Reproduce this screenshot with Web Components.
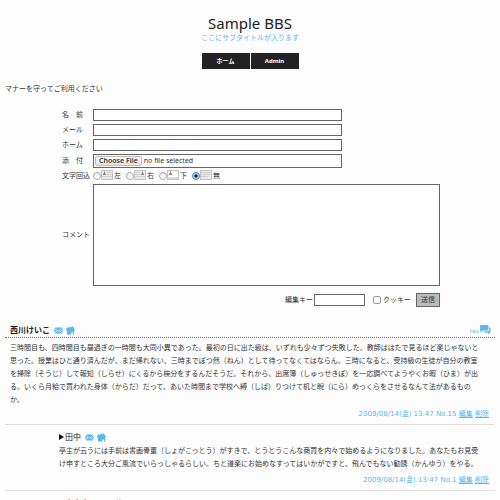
<!DOCTYPE html>
<html lang="ja">
<head>
<meta charset="utf-8">
<meta name="viewport" content="width=device-width, initial-scale=1">
<title>Sample BBS</title>
<style>
    body {
        margin: 0;
        background: #fdfdfd;
        color: #333;
        font: 7px/13px "DejaVu Sans", "Noto Sans CJK JP", sans-serif;
        --accent: #5bb8e8;
    }
</style>
</head>
<body>
<bbs-page>
    <bbs-header slot="header" heading="Sample BBS" subtitle="ここにサブタイトルが入ります">
        <nav-button href="#home">ホーム</nav-button>
        <nav-button href="#admin">Admin</nav-button>
    </bbs-header>
    <span slot="notice">マナーを守ってご利用ください</span>
    <post-form></post-form>
    <bbs-post author="西川けいこ" date="2009/08/14(金) 13:47" number="15">三時間目も、四時間目も昼過ぎの一時間も大同小異であった。最初の日に出た級は、いずれも少々ずつ失敗した。教師ははたで見るほど楽じゃないと思った。授業はひと通り済んだが、まだ帰れない、三時までぽつ然（ねん）として待ってなくてはならん。三時になると、受持級の生徒が自分の教室を掃除（そうじ）して報知（しらせ）にくるから検分をするんだそうだ。それから、出席簿（しゅっせきぼ）を一応調べてようやくお暇（ひま）が出る。いくら月給で買われた身体（からだ）だって、あいた時間まで学校へ縛（しば）りつけて机と睨（にら）めっくらをさせるなんて法があるものか。</bbs-post>
    <bbs-post reply author="田中" date="2009/08/14(金) 13:47" number="1">亭主が云うには手前は書画骨董（しょがこっとう）がすきで、とうとうこんな商買を内々で始めるようになりました。あなたもお見受け申すところ大分ご風流でいらっしゃるらしい。ちと道楽にお始めなすってはいかがですと、飛んでもない勧誘（かんゆう）をやる。</bbs-post>
    <bbs-post reply author="山本小川" date="2009/08/14(金) 13:48" number="2">今日は。</bbs-post>
</bbs-page>

<script>
class BbsPage extends HTMLElement {
    constructor() {
        super();
        this.attachShadow({ mode: 'open' }).innerHTML = `
        <style>
            :host {
                display: block;
                height: 100vh;
                overflow: hidden;
                padding: 0 5px;
                box-sizing: border-box;
            }

            .notice {
                margin: 14px 0 13px;
            }
        </style>
        <slot name="header"></slot>
        <p class="notice"><slot name="notice"></slot></p>
        <main><slot></slot></main>
        `;
    }
}

class BbsHeader extends HTMLElement {
    constructor() {
        super();
        this.attachShadow({ mode: 'open' }).innerHTML = `
        <style>
            :host {
                display: block;
                padding-top: 14px;
                text-align: center;
            }

            h1 {
                margin: 0;
                color: #222;
                font: 15px/18px "Noto Sans", sans-serif;
            }

            p {
                margin: 0;
                color: var(--accent);
                line-height: 12px;
            }

            nav {
                display: flex;
                justify-content: center;
                gap: 1px;
                margin-top: 9px;
            }
        </style>
        <h1></h1>
        <p></p>
        <nav><slot></slot></nav>
        `;
    }

    connectedCallback() {
        this.shadowRoot.querySelector('h1').textContent = this.getAttribute('heading');
        this.shadowRoot.querySelector('p').textContent = this.getAttribute('subtitle');
    }
}

class NavButton extends HTMLElement {
    constructor() {
        super();
        this.attachShadow({ mode: 'open' }).innerHTML = `
        <style>
            :host {
                display: block;
                width: 48px;
            }

            a {
                display: block;
                background: #222;
                color: #fff;
                font: bold 6px/16px "Noto Sans", "Noto Sans CJK JP", sans-serif;
                text-decoration: none;
            }
        </style>
        <a><slot></slot></a>
        `;
    }

    connectedCallback() {
        this.shadowRoot.querySelector('a').href = this.getAttribute('href');
    }
}

class WrapOption extends HTMLElement {
    constructor() {
        super();
        this.attachShadow({ mode: 'open' }).innerHTML = `
        <style>
            :host {
                display: block;
            }

            label {
                display: flex;
                align-items: center;
            }

            input {
                appearance: none;
                width: 8px;
                height: 8px;
                margin: 0;
                border: 1px solid #aaa;
                border-radius: 50%;
                background: linear-gradient(#eee, #fff);
            }

            input:checked {
                border-color: #5588bb;
                background: radial-gradient(circle, #123 0 1px, #9ccbf2 2px);
            }

            svg {
                width: 12px;
                height: 10px;
                margin: 0 1px 3px 0;
            }
        </style>
        <label><input type="radio" name="wrap"><svg viewBox="0 0 12 10" aria-hidden="true"></svg><slot></slot></label>
        `;
    }

    connectedCallback() {
        const kind = this.getAttribute('kind');
        const input = this.shadowRoot.querySelector('input');
        input.checked = this.hasAttribute('checked');
        input.addEventListener('change', () => {
            for (const other of this.parentNode.querySelectorAll('wrap-option')) {
                if (other !== this) other.shadowRoot.querySelector('input').checked = false;
            }
        });

        const person = x => `<rect x="${x - 2}" y="1" width="5" height="5" fill="#eee"/><path d="M${x} 1.5h1v2h1v1.5h-3v-1.5h1z" fill="#888"/>`;
        const lines = {
            left: 'M6 2.5h5M6 4.5h5M1 6.5h10',
            right: 'M1 2.5h5M1 4.5h5M1 6.5h10',
            below: '',
            none: 'M1 2.5h10M1 4.5h10M1 6.5h7'
        }[kind];
        const x = { left: 3, right: 8, below: 3 }[kind];
        this.shadowRoot.querySelector('svg').innerHTML = `
            <rect x=".5" y=".5" width="11" height="9" fill="${kind === 'below' ? '#fff' : '#e9e9e9'}" stroke="#c4c4c4"/>
            ${x ? person(x) : ''}
            ${kind === 'below' ? '<path d="M1 7h10v2h-10z" fill="#ddd"/>' : ''}
            <path d="${lines}" stroke="#d0d0d0" fill="none"/>`;
    }
}

class PostForm extends HTMLElement {
    constructor() {
        super();
        this.attachShadow({ mode: 'open' }).innerHTML = `
        <style>
            :host {
                display: block;
            }

            form {
                box-sizing: border-box;
                max-width: 380px;
                margin: 0 auto 16px;
                padding-left: 2px;
            }

            .fields {
                display: grid;
                grid-template-columns: 28px 1fr;
                column-gap: 3px;
                row-gap: 3px;
                align-items: center;
                line-height: 10px;
            }

            label {
                white-space: pre;
            }

            input, textarea, button {
                box-sizing: border-box;
                margin: 0;
                padding: 0 2px;
                border: 1px solid #666;
                border-radius: 0;
                background: #fff;
                font: inherit;
            }

            .text {
                width: 249px;
                max-width: 100%;
                height: 12px;
            }

            .file {
                position: relative;
                display: flex;
                align-items: center;
                gap: 2px;
                box-sizing: border-box;
                width: 249px;
                max-width: 100%;
                height: 14px;
                padding-left: 1px;
                border: 1px solid #666;
                background: #fff;
                font-family: "Noto Sans", sans-serif;
            }

            .file input {
                position: absolute;
                inset: 0;
                width: 100%;
                opacity: 0;
            }

            .choose {
                padding: 0 3px;
                border: 1px solid #bbb;
                border-radius: 2px;
                background: linear-gradient(#fff, #e4e4e4);
                font-weight: 600;
                line-height: 8px;
            }

            .options {
                display: flex;
                gap: 5px;
                height: 10px;
                align-items: center;
            }

            textarea {
                width: 100%;
                height: 102px;
                resize: none;
            }

            .send {
                display: flex;
                align-items: center;
                justify-content: flex-end;
                margin-top: 7px;
            }

            .key {
                width: 51px;
                height: 12px;
                margin: 0 8px 0 1px;
            }

            .cookie {
                appearance: none;
                width: 8px;
                height: 8px;
                margin-right: 2px;
                padding: 0;
                border-color: #999;
                border-radius: 2px;
            }

            .cookie:checked {
                background: #5588bb;
            }

            button {
                width: 24px;
                height: 14px;
                margin-left: 5px;
                padding: 0;
                background: #bbb;
                color: #333;
            }
        </style>
        <form>
            <div class="fields">
                <label for="name">名　前</label>
                <input class="text" id="name">
                <label for="mail">メール</label>
                <input class="text" id="mail">
                <label for="home">ホーム</label>
                <input class="text" id="home">
                <label for="file">添　付</label>
                <div class="file">
                    <span class="choose">Choose File</span>
                    <span>no file selected</span>
                    <input type="file" id="file">
                </div>
                <span id="wrap">文字回込</span>
                <div class="options" role="radiogroup" aria-labelledby="wrap">
                    <wrap-option kind="left">左</wrap-option>
                    <wrap-option kind="right">右</wrap-option>
                    <wrap-option kind="below">下</wrap-option>
                    <wrap-option kind="none" checked>無</wrap-option>
                </div>
                <label for="comment">コメント</label>
                <textarea id="comment"></textarea>
            </div>
            <div class="send">
                <label for="key">編集キー</label>
                <input class="key" id="key" type="password">
                <input class="cookie" id="cookie" type="checkbox">
                <label for="cookie">クッキー</label>
                <button type="button">送信</button>
            </div>
        </form>
        `;
    }
}

class BbsPost extends HTMLElement {
    constructor() {
        super();
        this.attachShadow({ mode: 'open' }).innerHTML = `
        <style>
            :host {
                display: block;
                border-bottom: 1px solid #ddd;
            }

            header {
                display: flex;
                align-items: center;
                height: 14px;
                padding: 0 4px 0 5px;
                border-bottom: 1px dotted #777;
            }

            h2 {
                margin: 0 4px 0 0;
                color: #222;
                font-size: 8px;
                line-height: 13px;
            }

            a {
                color: var(--accent);
            }

            svg {
                display: block;
                fill: var(--accent);
            }

            .icon {
                margin-right: 3px;
            }

            .res {
                display: flex;
                align-items: center;
                margin-left: auto;
                font-size: 6px;
                text-decoration: none;
            }

            .body {
                margin: 0;
                padding: 4px 15px 0 5px;
            }

            footer {
                padding: 1px 6px 3px 0;
                color: var(--accent);
                text-align: right;
            }

            :host([reply]) article {
                margin-left: 50px;
            }

            :host([reply]) header {
                padding: 5px 4px 0;
                border: 0;
            }

            :host([reply]) h2 {
                font-weight: normal;
            }

            :host([reply]) h2::before {
                content: "";
                display: inline-block;
                border: solid transparent;
                border-width: 3px 0 3px 5px;
                border-left-color: #111;
                margin-right: 1px;
            }

            :host([reply]) .res {
                display: none;
            }

            :host([reply]) .body {
                padding: 1px 15px 2px 4px;
            }
        </style>
        <article>
            <header>
                <h2></h2>
                <a class="icon" href="#mail" aria-label="mail">
                    <svg width="9" height="7" viewBox="0 0 9 7"><rect x=".5" y=".5" width="8" height="6" rx="1.5"/><path d="M1.2 1.800l3.300 2.400 3.300-2.400M1.200 5.600l1.800-1.500M7.800 5.600l-1.800-1.500" stroke="#fff" stroke-width=".7" fill="none"/></svg>
                </a>
                <a class="icon" href="#home" aria-label="home">
                    <svg width="9" height="9" viewBox="0 0 9 9"><path d="M1 1.500h2l1.500-1L6 1.500V.5h1.500v1.500L9 3.500v1H8v4H7V6.500H5.500v2H1v-4H0v-1z"/></svg>
                </a>
                <a class="res" href="#res"><span>res</span>
                    <svg width="12" height="10" viewBox="0 0 12 10"><path d="M2 0h6.500q1 0 1 1v3.500q0 1-1 1H4L1.500 7.500V5.500Q1 5.300 1 4.500V1q0-1 1-1z"/><path d="M10.200 2.500q1.300 0 1.300 1v3q0 1-1 1V9.500L8.500 7.500H5.500q-.8 0-.8-1.300H9q1.200 0 1.200-1.200z"/></svg>
                </a>
            </header>
            <p class="body"><slot></slot></p>
            <footer><span class="date"></span> <a href="#edit">編集</a> <a href="#delete">削除</a></footer>
        </article>
        `;
    }

    connectedCallback() {
        this.shadowRoot.querySelector('h2').textContent = this.getAttribute('author');
        this.shadowRoot.querySelector('.date').textContent = `${this.getAttribute('date')} No.${this.getAttribute('number')}`;
    }
}

customElements.define('bbs-page', BbsPage);
customElements.define('bbs-header', BbsHeader);
customElements.define('nav-button', NavButton);
customElements.define('wrap-option', WrapOption);
customElements.define('post-form', PostForm);
customElements.define('bbs-post', BbsPost);
</script>
</body>
</html>
